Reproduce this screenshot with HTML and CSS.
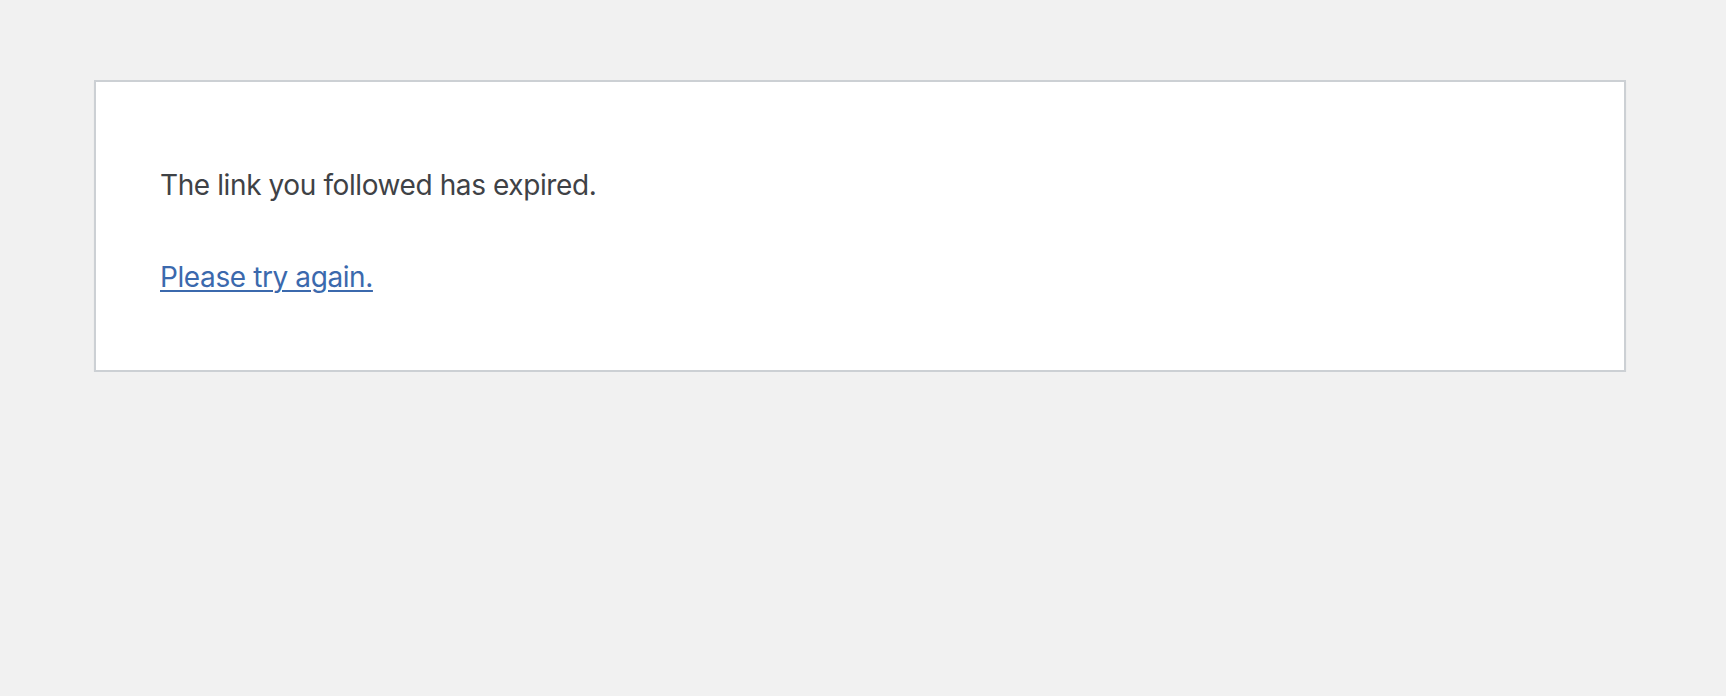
FILE: index.html
```html
<!DOCTYPE html>
<html lang="en">
<head>
<meta charset="utf-8">
<title>Something went wrong</title>
<link rel="stylesheet" href="styles.css">
</head>
<body>
<main class="error-page">
<p class="message">The link you followed has expired.</p>
<p class="message"><a class="retry" href="#">Please try again.</a></p>
</main>
</body>
</html>
```
FILE: styles.css
```css
html {
  background: #f1f1f1;
}
body {
  margin: 0;
  padding: 80px 0 0 94px;
  font-family: Inter, "Noto Sans", sans-serif;
  color: #3f4246;
}
.error-page {
  box-sizing: border-box;
  width: 1532px;
  background: #fff;
  border: 2px solid #ccd0d4;
  box-shadow: 0 2px 2px rgba(0, 0, 0, 0.04);
  padding: 32px 64px;
}
.message {
  font-size: 28px;
  line-height: 1.5;
  letter-spacing: -0.4px;
  margin: 50px 0 40px;
}
.retry {
  color: #3b69ad;
  text-decoration: underline;
  text-decoration-thickness: 2px;
  text-underline-offset: 3px;
}
```
